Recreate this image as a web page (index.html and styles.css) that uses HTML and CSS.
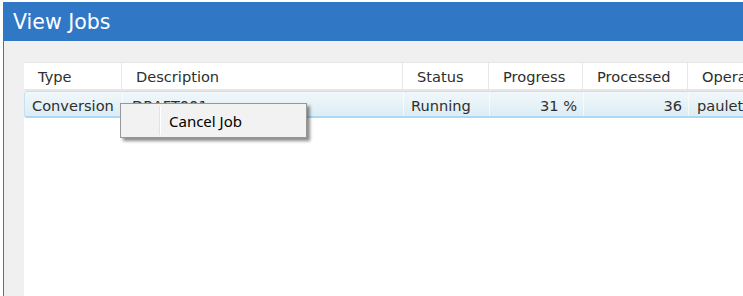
FILE: index.html
```html
<!DOCTYPE html>
<html>
<head>
<meta charset="utf-8">
<title>View Jobs</title>
<link rel="stylesheet" href="styles.css">
</head>
<body>
<div class="window">
  <div class="titlebar">View Jobs</div>
  <div class="content">
    <div class="grid">
      <div class="row header">
        <div class="cell">Type</div>
        <div class="cell">Description</div>
        <div class="cell">Status</div>
        <div class="cell">Progress</div>
        <div class="cell">Processed</div>
        <div class="cell">Operator</div>
      </div>
      <div class="row data">
        <div class="cell">Conversion</div>
        <div class="cell desc">DRAFT001</div>
        <div class="cell">Running</div>
        <div class="cell num">31 %</div>
        <div class="cell num">36</div>
        <div class="cell op">paulette</div>
      </div>
    </div>
  </div>
</div>
<div class="menu">
  <div class="menu-icon"></div>
  <div class="menu-item">Cancel Job</div>
</div>
</body>
</html>
```

FILE: styles.css
```css
html, body {
  margin: 0;
  padding: 0;
  height: 100%;
  overflow: hidden;
}
body {
  background: #ffffff;
  font-family: "DejaVu Sans", Verdana, sans-serif;
  padding: 2px 0 0 3px;
  box-sizing: border-box;
}
.window {
  height: 100%;
  border-left: 1px solid #3077c6;
  background: #f0f0f0;
  display: flex;
  flex-direction: column;
}
.titlebar {
  height: 39px;
  flex: none;
  background: #3077c6;
  color: #ffffff;
  font-size: 20.5px;
  display: flex;
  align-items: center;
  padding-left: 9px;
}
.content {
  flex: 1;
  padding: 21px 0 0 20px;
  display: flex;
  min-height: 0;
}
.grid {
  flex: 1;
  background: #ffffff;
  overflow: hidden;
  color: #2e2e2e;
  font-size: 14.6px;
}
.row {
  display: grid;
  grid-template-columns: 98px 281px 86px 94px 105px 140px;
  width: 804px;
}
.header {
  height: 29px;
  border-top: 1px solid #e6e6e6;
  border-bottom: 2px solid #e6e6e6;
  box-sizing: border-box;
}
.header .cell {
  padding-left: 14px;
  border-right: 1px solid #e6e6e6;
  display: flex;
  align-items: center;
  white-space: nowrap;
}
.data {
  height: 27px;
  box-sizing: border-box;
  border: 1px solid #c3e2f4;
  border-bottom: 2px solid #aad8f5;
  border-radius: 3px 0 0 3px;
  background: linear-gradient(#f1f7fa, #dcedf5);
}
.data .cell {
  display: flex;
  align-items: center;
  padding-left: 7px;
  padding-top: 3px;
  white-space: nowrap;
  border-right: 1px solid rgba(255, 255, 255, 0.6);
}
.data .cell.desc {
  padding-left: 9px;
}
.data .cell.num {
  justify-content: flex-end;
  padding-left: 0;
  padding-right: 6px;
}
.data .cell.op {
  padding-left: 8px;
}
.menu {
  position: absolute;
  left: 120px;
  top: 103px;
  width: 187px;
  height: 35px;
  box-sizing: border-box;
  border: 1px solid #979797;
  background: #f2f2f2;
  box-shadow: 3px 3px 3px rgba(0, 0, 0, 0.45);
  display: flex;
  font-family: "Noto Sans", "Open Sans", sans-serif;
  font-size: 15px;
  color: #000000;
}
.menu-icon {
  width: 38px;
  border-right: 1px solid #e2e2e2;
  box-shadow: 1px 0 0 #ffffff;
  margin: 2px 0;
}
.menu-item {
  display: flex;
  align-items: center;
  padding-left: 9px;
}
```
